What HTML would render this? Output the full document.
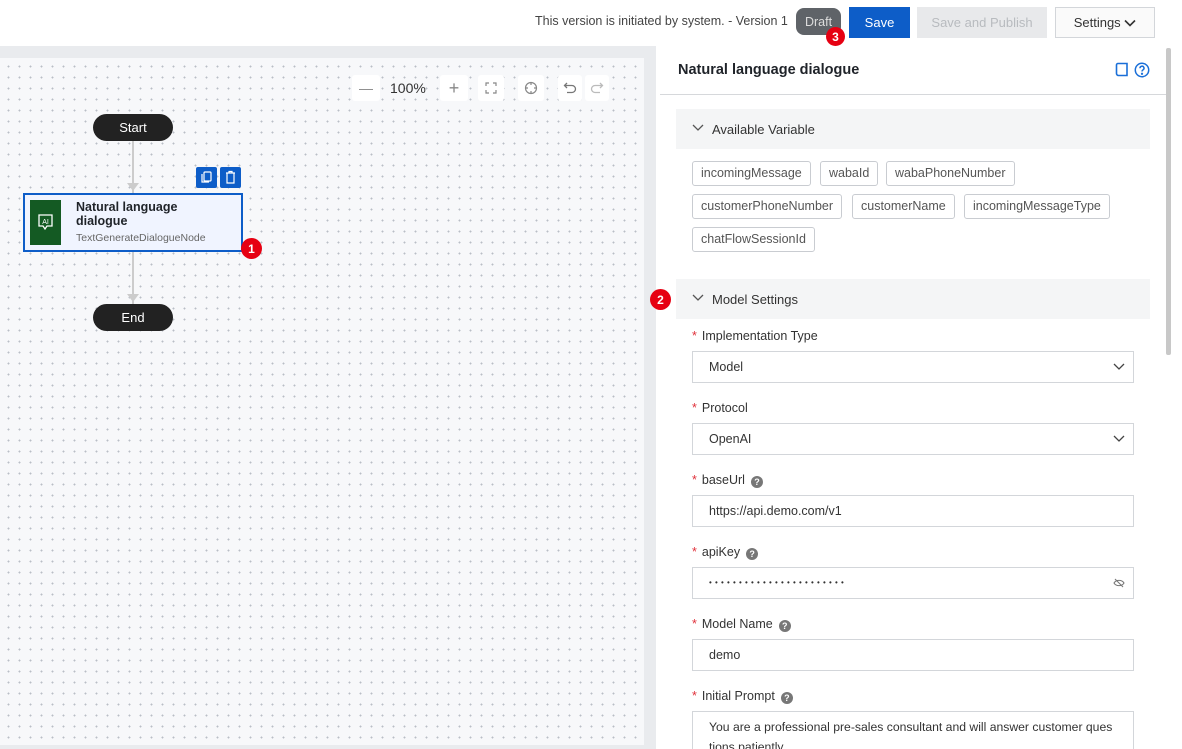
<!DOCTYPE html>
<html><head><meta charset="utf-8"><style>
*{box-sizing:border-box;margin:0;padding:0}
html,body{width:1182px;height:749px;overflow:hidden}
body{background:#fff;font-family:"Liberation Sans",Arial,sans-serif;color:#1f2329;position:relative}
.abs{position:absolute}
.top{left:0;top:0;width:1182px;height:46px;background:#fff}
.btn{position:absolute;top:7px;height:31px;font-size:13px;display:flex;align-items:center;justify-content:center}
.grey{left:0;top:46px;width:656px;height:703px;background:#e9ebee}
.canvas{left:0;top:58px;width:644px;height:687px;background-color:#f7f8fa;background-image:radial-gradient(circle,#b9bec6 0.8px,transparent 1.1px);background-size:11px 11px;background-position:3px 3px}
.tool{position:absolute;top:75px;height:26px;background:#fff;border-radius:3px;display:flex;align-items:center;justify-content:center;color:#888;font-size:14px}
.pill{position:absolute;left:93px;width:80px;height:27px;border-radius:14px;background:#222;color:#fff;font-size:13px;display:flex;align-items:center;justify-content:center}
.badge{position:absolute;width:19px;height:19px;border-radius:50%;background:#e60012;color:#fff;font-size:12px;font-weight:bold;display:flex;align-items:center;justify-content:center}
.panel{left:656px;top:47px;width:516px;height:702px;background:#fff}
.sec{position:absolute;left:676px;width:474px;height:40px;background:#f4f5f6;font-size:13px;display:flex;align-items:center;padding-left:36px;color:#333}
.sec svg{position:absolute;left:16px;top:15px}
.tag{position:absolute;height:25px;border:1px solid #c9ccd1;border-radius:3px;font-size:12.5px;color:#555;padding:0 8px;line-height:23px}
.lbl{position:absolute;left:692px;font-size:12.5px;color:#333}
.lbl b{color:#e0303a;font-weight:normal;margin-right:5px}
.q{display:inline-block;width:12px;height:12px;border-radius:50%;background:#777;color:#fff;font-size:9px;text-align:center;line-height:12px;font-weight:bold;margin-left:6px;vertical-align:-1px}
.inp{position:absolute;left:692px;width:442px;height:32px;border:1px solid #d3d6da;font-size:12.5px;color:#333;padding-left:16px;line-height:30px}
</style></head><body>
<div class="abs top">
  <div class="abs" style="left:535px;top:14px;font-size:12.5px;color:#444">This version is initiated by system. - Version 1</div>
  <div class="btn" style="left:796px;top:8px;width:45px;height:27px;background:#5f6368;color:#ddd;border-radius:8px;font-size:12.5px">Draft</div>
  <div class="badge" style="left:826px;top:27px">3</div>
  <div class="btn" style="left:849px;width:61px;background:#0d5dc8;color:#fff">Save</div>
  <div class="btn" style="left:917px;width:130px;background:#e8e9eb;color:#b8bbbf">Save and Publish</div>
  <div class="btn" style="left:1055px;width:100px;border:1px solid #d3d6da;background:#fafafa;color:#333">Settings&nbsp;<svg width="12" height="8" viewBox="0 0 12 8"><path d="M1 1.5l5 5 5-5" stroke="#333" stroke-width="1.6" fill="none"/></svg></div>
</div>
<div class="abs grey"></div>
<div class="abs canvas"></div>
<div class="tool" style="left:352px;width:28px">—</div>
<div class="abs" style="left:390px;top:80px;font-size:14px;color:#333">100%</div>
<div class="tool" style="left:440px;width:28px;font-size:18px">+</div>
<div class="tool" style="left:478px;width:26px"><svg width="12" height="12" viewBox="0 0 12 12" fill="none" stroke="#888" stroke-width="1.2"><path d="M1 4V1h3M8 1h3v3M11 8v3H8M4 11H1V8"/></svg></div>
<div class="tool" style="left:518px;width:26px"><svg width="14" height="14" viewBox="0 0 14 14" fill="none" stroke="#888" stroke-width="1.2"><circle cx="7" cy="7" r="5.5"/><path d="M7 1v3M7 10v3M1 7h3M10 7h3"/></svg></div>
<div class="tool" style="left:558px;width:24px"><svg width="14" height="14" viewBox="0 0 14 14" fill="none" stroke="#777" stroke-width="1.3"><path d="M4 2L1.5 4.5 4 7M1.5 4.5H9a3.5 3.5 0 010 7H4"/></svg></div>
<div class="tool" style="left:585px;width:24px"><svg width="14" height="14" viewBox="0 0 14 14" fill="none" stroke="#bbb" stroke-width="1.3"><path d="M10 2l2.5 2.5L10 7M12.5 4.5H5a3.5 3.5 0 000 7h5"/></svg></div>
<div class="abs" style="left:132px;top:140px;width:2px;height:55px;background:#ccc"></div>
<div class="abs" style="left:132px;top:251px;width:2px;height:54px;background:#ccc"></div>
<div class="abs" style="left:127px;top:183px;border:6px solid transparent;border-top:8px solid #ccc;border-bottom:0"></div>
<div class="abs" style="left:127px;top:294px;border:6px solid transparent;border-top:8px solid #ccc;border-bottom:0"></div>
<div class="pill" style="top:114px">Start</div>
<div class="pill" style="top:304px">End</div>
<div class="abs" style="left:196px;top:167px;width:21px;height:21px;background:#0d5dc8;border-radius:2px"><svg width="21" height="21" viewBox="0 0 21 21" fill="none" stroke="#fff" stroke-width="1.2"><rect x="8" y="5" width="7" height="9" rx="1"/><path d="M6 7v8h7"/></svg></div>
<div class="abs" style="left:220px;top:167px;width:21px;height:21px;background:#0d5dc8;border-radius:2px"><svg width="21" height="21" viewBox="0 0 21 21" fill="none" stroke="#fff" stroke-width="1.2"><path d="M6 6h9M9 6V4.5h3V6M7 6v10h7V6"/></svg></div>
<div class="abs" style="left:23px;top:193px;width:220px;height:59px;background:#f0f4ff;border:2px solid #0d5dc8"></div>
<div class="abs" style="left:30px;top:200px;width:31px;height:45px;background:#145a23"><svg width="31" height="45" viewBox="0 0 31 45" fill="none" stroke="#fff" stroke-width="1.3"><path d="M9 15h13v11h-5l-2 3-2-3H9z"/><text x="15.5" y="24" font-size="7" fill="#fff" stroke="none" text-anchor="middle" font-family="Liberation Sans">AI</text></svg></div>
<div class="abs" style="left:76px;top:200px;font-size:12.5px;font-weight:bold;line-height:14px;color:#1f2329">Natural language<br>dialogue</div>
<div class="abs" style="left:76px;top:232px;font-size:10.5px;color:#666">TextGenerateDialogueNode</div>
<div class="badge" style="left:241px;top:238px;width:21px;height:21px">1</div>

<div class="abs panel"></div>
<div class="abs" style="left:1166px;top:48px;width:5px;height:307px;background:#c8c8c8;border-radius:2px"></div>
<div class="abs" style="left:678px;top:62px;font-size:14.5px;font-weight:bold">Natural language dialogue</div>
<svg class="abs" style="left:1115px;top:62px" width="14" height="16" viewBox="0 0 14 16" fill="none" stroke="#1a6fd8" stroke-width="1.6"><path d="M3 1.5h9v12H3.5a2 2 0 01-2-2V3a1.5 1.5 0 011.5-1.5z"/></svg>
<svg class="abs" style="left:1134px;top:62px" width="16" height="16" viewBox="0 0 16 16" fill="none" stroke="#1a6fd8" stroke-width="1.5"><circle cx="8" cy="8" r="6.7"/><path d="M6 6.2a2 2 0 113 1.7c-.8.5-1 .9-1 1.6"/><circle cx="8" cy="11.8" r=".4" fill="#1a6fd8"/></svg>
<div class="abs" style="left:660px;top:94px;width:506px;height:1px;background:#d6d8db"></div>
<div class="sec" style="top:109px"><svg width="12" height="8" viewBox="0 0 12 8"><path d="M1 1l5 5 5-5" stroke="#555" stroke-width="1.3" fill="none"/></svg>Available Variable</div>
<div class="tag" style="left:692px;top:161px">incomingMessage</div>
<div class="tag" style="left:820px;top:161px">wabaId</div>
<div class="tag" style="left:886px;top:161px">wabaPhoneNumber</div>
<div class="tag" style="left:692px;top:194px">customerPhoneNumber</div>
<div class="tag" style="left:852px;top:194px">customerName</div>
<div class="tag" style="left:964px;top:194px">incomingMessageType</div>
<div class="tag" style="left:692px;top:227px">chatFlowSessionId</div>
<div class="badge" style="left:650px;top:289px;width:21px;height:21px">2</div>
<div class="sec" style="top:279px"><svg width="12" height="8" viewBox="0 0 12 8"><path d="M1 1l5 5 5-5" stroke="#555" stroke-width="1.3" fill="none"/></svg>Model Settings</div>
<div class="lbl" style="top:329px"><b>*</b>Implementation Type</div>
<div class="inp" style="top:351px">Model<svg style="position:absolute;right:8px;top:11px" width="12" height="8" viewBox="0 0 12 8"><path d="M1 1l5 5 5-5" stroke="#444" stroke-width="1.3" fill="none"/></svg></div>
<div class="lbl" style="top:401px"><b>*</b>Protocol</div>
<div class="inp" style="top:423px">OpenAI<svg style="position:absolute;right:8px;top:11px" width="12" height="8" viewBox="0 0 12 8"><path d="M1 1l5 5 5-5" stroke="#444" stroke-width="1.3" fill="none"/></svg></div>
<div class="lbl" style="top:473px"><b>*</b>baseUrl<span class="q">?</span></div>
<div class="inp" style="top:495px">https://api.demo.com/v1</div>
<div class="lbl" style="top:545px"><b>*</b>apiKey<span class="q">?</span></div>
<div class="inp" style="top:567px;font-size:8px;letter-spacing:3.2px">•••••••••••••••••••••••<svg style="position:absolute;right:8px;top:10px" width="12" height="10" viewBox="0 0 12 10" fill="none" stroke="#777" stroke-width="1.1"><path d="M1 5c2-3.5 8-3.5 10 0-2 3.5-8 3.5-10 0z"/><path d="M2 1l8 8"/></svg></div>
<div class="lbl" style="top:617px"><b>*</b>Model Name<span class="q">?</span></div>
<div class="inp" style="top:639px">demo</div>
<div class="lbl" style="top:689px"><b>*</b>Initial Prompt<span class="q">?</span></div>
<div class="inp" style="top:711px;height:38px;line-height:20px;padding-top:5px;white-space:nowrap;overflow:hidden;font-size:12.2px;border-bottom:none">You are a professional pre-sales consultant and will answer customer ques<br>tions patiently</div>
</body></html>
